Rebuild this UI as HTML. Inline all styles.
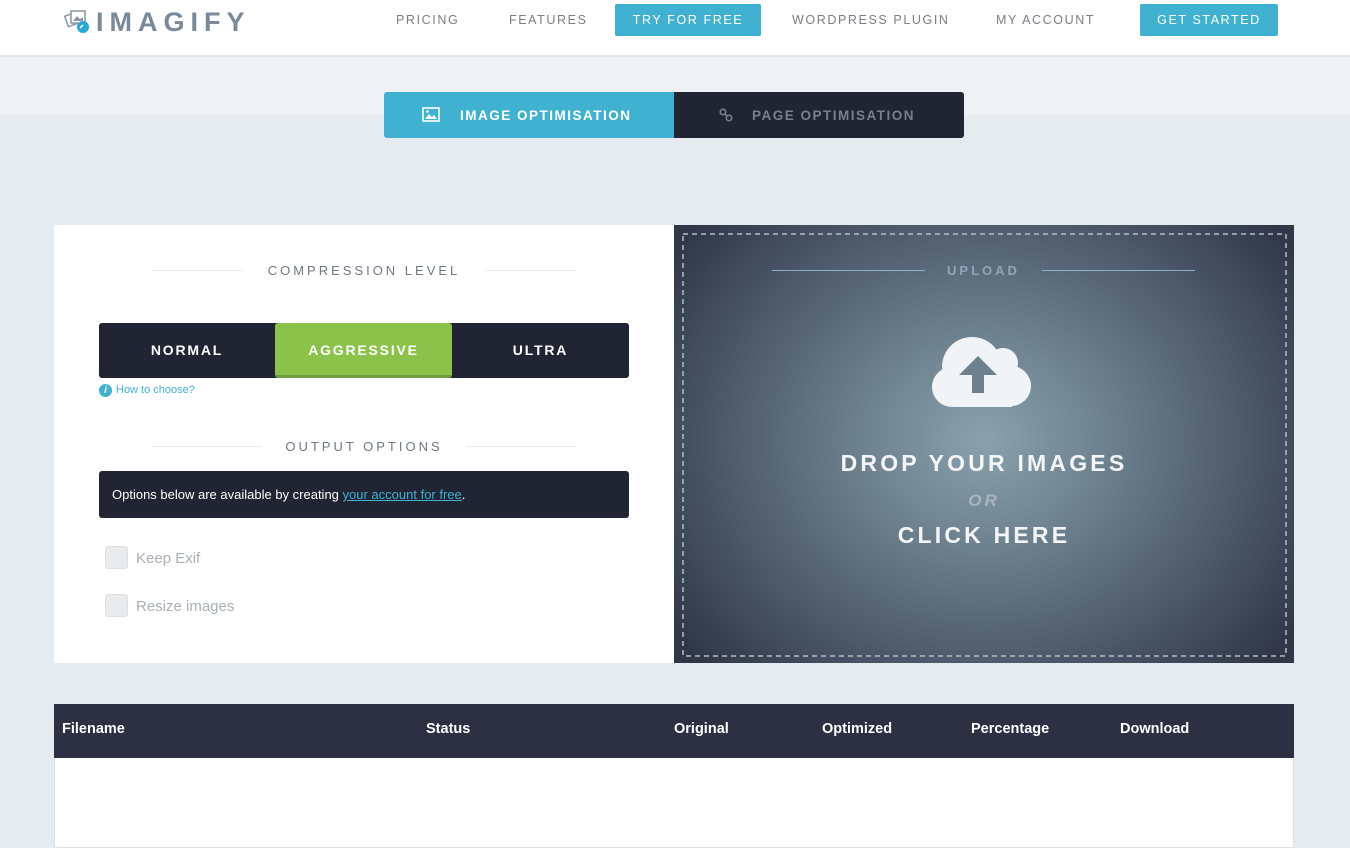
<!DOCTYPE html>
<html><head><meta charset="utf-8"><style>
*{margin:0;padding:0;box-sizing:border-box}
body{width:1350px;height:846px;overflow:hidden;background:#e6ebef;font-family:"Liberation Sans",sans-serif;position:relative}
.a{position:absolute}
.hdr{left:0;top:0;width:1350px;height:57px;background:#fff;border-bottom:2px solid #e3e7ea}
.nav{font-size:12.5px;letter-spacing:1.6px;color:#7d7d85;top:13px;line-height:14px}
.btn{background:#40b1d1;color:#fff;border-radius:2px;height:32px;top:4px;line-height:32px;text-align:center;font-size:12.5px;letter-spacing:1.6px}
.band{left:0;top:57px;width:1350px;height:58px;background:#eff3f6}
.tab{top:92px;height:46px;line-height:48px;font-size:13.5px;font-weight:bold;letter-spacing:1.5px}
.sec{font-size:13px;letter-spacing:3px;color:#6f7883;text-align:center}
.ln{height:1px;background:#e8ebee}
.lvl{top:323px;height:55px;line-height:54px;text-align:center;color:#fff;font-weight:bold;font-size:14px;letter-spacing:1.8px}
.chk{width:23px;height:23px;border:1px solid #dde1e4;background:#e9ebed;border-radius:3px}
.th{color:#fff;font-weight:bold;font-size:14.5px;top:721px}
</style></head><body>
<div class="a hdr"></div>
<svg class="a" style="left:64px;top:9px" width="28" height="24" viewBox="0 0 28 24"><rect x="2" y="5" width="13" height="11" transform="rotate(-20 8 10)" fill="#fff" stroke="#8a96a2" stroke-width="1.5"/><rect x="7" y="2" width="14" height="12" fill="#fff" stroke="#8a96a2" stroke-width="1.5"/><path d="M9 12l4-5 3 3 3-2v4z" fill="#8a96a2"/><circle cx="19" cy="18" r="6" fill="#2aa6d8"/><path d="M16 19l3-3" stroke="#fff" stroke-width="1.5"/></svg>
<div class="a" style="left:96px;top:7px;font-size:27px;letter-spacing:6px;color:#7b8a99;font-weight:bold">IMAGIFY</div>
<div class="a nav" style="left:396px">PRICING</div>
<div class="a nav" style="left:509px">FEATURES</div>
<div class="a btn" style="left:615px;width:146px;line-height:33px">TRY FOR FREE</div>
<div class="a nav" style="left:792px">WORDPRESS PLUGIN</div>
<div class="a nav" style="left:996px">MY ACCOUNT</div>
<div class="a btn" style="left:1140px;width:138px;line-height:33px">GET STARTED</div>
<div class="a band"></div>
<div class="a tab" style="left:384px;width:290px;background:#40b1d1;color:#fff;border-radius:3px 0 0 3px"><svg class="a" style="left:38px;top:15px" width="18" height="15" viewBox="0 0 18 15"><rect x="1" y="1" width="16" height="13" fill="none" stroke="#fff" stroke-width="1.6"/><path d="M3 12l4-5 3 3 2-2 3 4z" fill="#fff"/><circle cx="5.5" cy="4.5" r="1.3" fill="#fff"/></svg><span class="a" style="left:76px">IMAGE OPTIMISATION</span></div>
<div class="a tab" style="left:674px;width:290px;background:#212433;color:#77808d;border-radius:0 3px 3px 0"><svg class="a" style="left:45px;top:16px" width="14" height="14" viewBox="0 0 14 14"><circle cx="4" cy="4" r="2.7" fill="none" stroke="#77808d" stroke-width="1.6"/><circle cx="10" cy="10" r="2.7" fill="none" stroke="#77808d" stroke-width="1.6"/><path d="M5.5 5.5l3 3" stroke="#77808d" stroke-width="1.6"/></svg><span class="a" style="left:78px">PAGE OPTIMISATION</span></div>
<div class="a" style="left:54px;top:225px;width:620px;height:438px;background:#fff"></div>
<div class="a ln" style="left:152px;top:270px;width:91px"></div><div class="a ln" style="left:485px;top:270px;width:91px"></div>
<div class="a sec" style="left:243px;top:263px;width:242px">COMPRESSION LEVEL</div>
<div class="a" style="left:99px;top:323px;width:530px;height:55px;background:#212433;border-radius:3px"></div>
<div class="a lvl" style="left:99px;width:176px">NORMAL</div>
<div class="a lvl" style="left:275px;width:177px;background:#8bc34a;border-bottom:3px solid #6f9e3a;border-radius:3px">AGGRESSIVE</div>
<div class="a lvl" style="left:452px;width:177px">ULTRA</div>
<div class="a" style="left:99px;top:384px;width:13px;height:13px;border-radius:50%;background:#40b1d1;color:#fff;font-size:10px;font-weight:bold;text-align:center;line-height:13px;font-style:italic">i</div>
<div class="a" style="left:116px;top:384px;font-size:11px;color:#40b1d1">How to choose?</div>
<div class="a ln" style="left:152px;top:446px;width:110px"></div><div class="a ln" style="left:466px;top:446px;width:110px"></div>
<div class="a sec" style="left:262px;top:439px;width:204px">OUTPUT OPTIONS</div>
<div class="a" style="left:99px;top:471px;width:530px;height:47px;background:#212433;border-radius:3px;color:#fff;font-size:13px;line-height:47px;padding-left:13px">Options below are available by creating <span style="color:#40b1d1;text-decoration:underline">your account for free</span>.</div>
<div class="a chk" style="left:105px;top:546px"></div><div class="a" style="left:136px;top:550px;font-size:15px;color:#a9b0b8">Keep Exif</div>
<div class="a chk" style="left:105px;top:594px"></div><div class="a" style="left:136px;top:598px;font-size:15px;color:#a9b0b8">Resize images</div>
<div class="a" style="left:674px;top:225px;width:620px;height:438px;background:radial-gradient(ellipse 380px 330px at 310px 215px,#8aa1ad 0%,#6b7e8c 35%,#4b5869 70%,#303748 100%)"></div>
<svg class="a" style="left:682px;top:233px" width="605" height="424"><rect x="1" y="1" width="603" height="422" fill="none" stroke="#b4bec8" stroke-width="1.5" stroke-dasharray="5 4"/></svg>
<div class="a" style="left:772px;top:270px;width:153px;height:1px;background:#8fb0c4"></div><div class="a" style="left:1042px;top:270px;width:153px;height:1px;background:#8fb0c4"></div>
<div class="a" style="left:925px;top:263px;width:117px;text-align:center;font-size:13px;letter-spacing:3px;color:#8fa6b6;font-weight:bold">UPLOAD</div>
<svg class="a" style="left:932px;top:335px" width="100" height="73" viewBox="0 0 100 73"><circle cx="40" cy="32" r="30" fill="#f1f4f7"/><circle cx="71" cy="28" r="15" fill="#f1f4f7"/><circle cx="20" cy="52" r="20" fill="#f1f4f7"/><circle cx="79" cy="51" r="20" fill="#f1f4f7"/><rect x="20" y="40" width="60" height="32" fill="#f1f4f7"/><path d="M46 21l-19 19h13v18h12v-18h13z" fill="#6d808e"/></svg>
<div class="a" style="left:674px;top:450px;width:620px;text-align:center;color:#f3f5f7;font-size:23px;font-weight:bold;letter-spacing:3.2px">DROP YOUR IMAGES</div>
<div class="a" style="left:674px;top:491px;width:620px;text-align:center;color:#a9b3bb;font-size:17px;font-weight:bold;font-style:italic;letter-spacing:3px">OR</div>
<div class="a" style="left:674px;top:522px;width:620px;text-align:center;color:#f3f5f7;font-size:23px;font-weight:bold;letter-spacing:3.2px">CLICK HERE</div>
<div class="a" style="left:54px;top:704px;width:1240px;height:54px;background:#2d3042"></div>
<div class="a" style="left:54px;top:758px;width:1240px;height:90px;background:#fff;border:1px solid #dde1e4;border-top:0"></div>
<div class="a th" style="left:62px">Filename</div>
<div class="a th" style="left:426px">Status</div>
<div class="a th" style="left:674px">Original</div>
<div class="a th" style="left:822px">Optimized</div>
<div class="a th" style="left:971px">Percentage</div>
<div class="a th" style="left:1120px">Download</div>
</body></html>
